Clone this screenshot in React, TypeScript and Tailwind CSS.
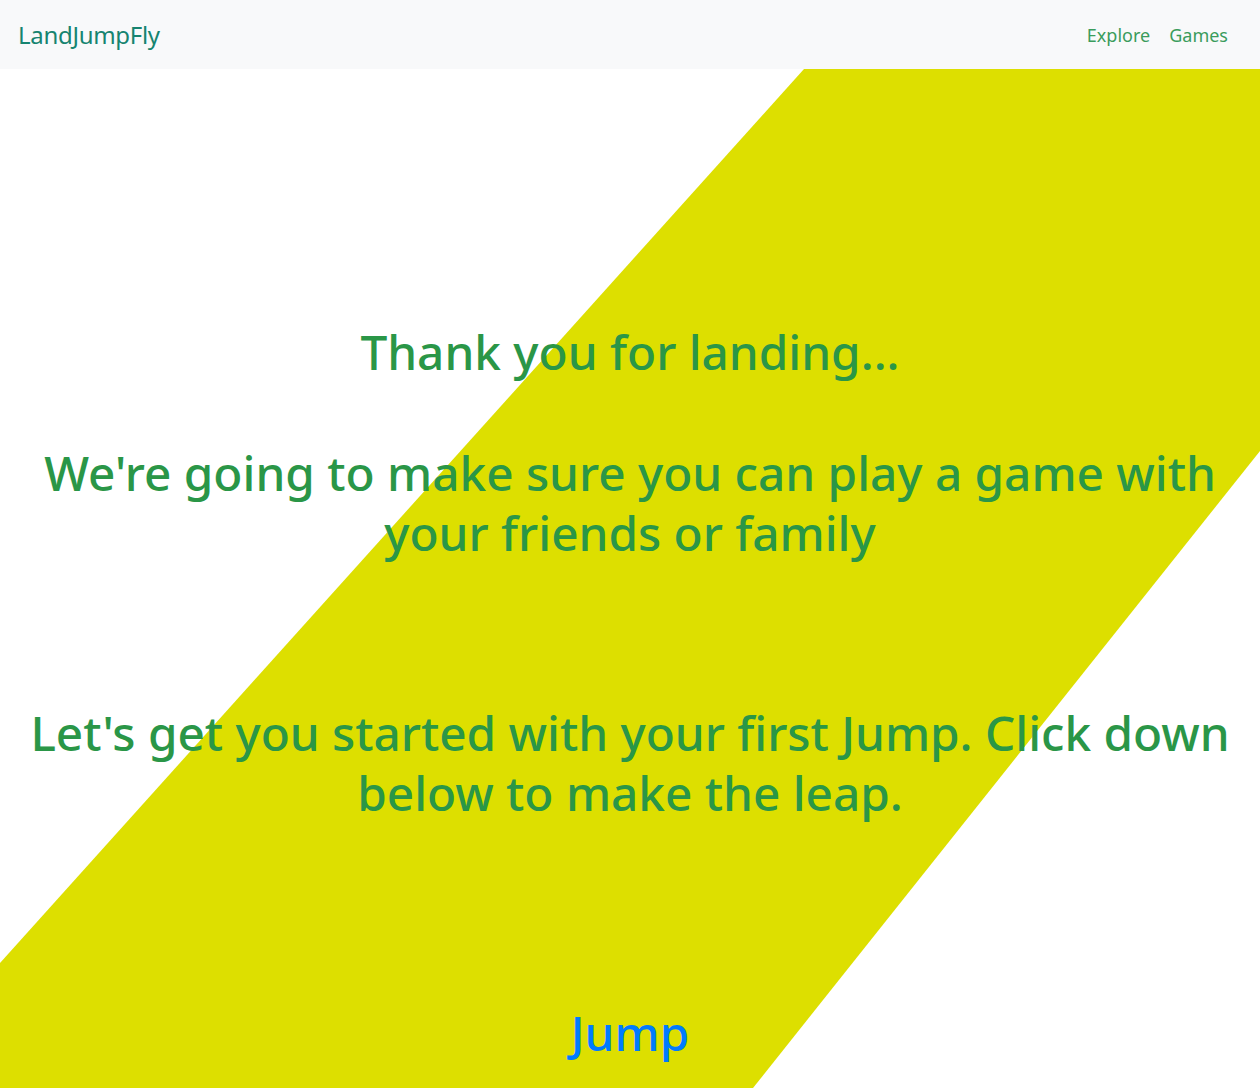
import React from "react";

export default function App() {
  return (
    <div className="min-h-[1088px] bg-white overflow-hidden" style={{ fontFamily: '"Noto Sans", "Open Sans", sans-serif' }}>
      <nav className="h-[69px] bg-[#f8f9fa] flex items-center justify-between pl-[18px] pr-[32px]">
        <a className="text-[24px] text-[#168470] tracking-[-0.3px]" href="#">LandJumpFly</a>
        <div className="flex items-center gap-[19px] text-[18px] text-[#3a9c5c] pt-[1px]">
          <a href="#">Explore</a>
          <a href="#">Games</a>
        </div>
      </nav>
      <section className="relative h-[1019px]">
        <div className="absolute inset-0 bg-[#dddf00] [clip-path:polygon(804px_0,100%_0,100%_382px,753px_100%,0_100%,0_894px)]" />
        <div className="relative flex flex-col items-center text-center text-[#2a9647] font-medium text-[47.7px] leading-[60px] px-[15px]">
          <h1 className="mt-[253px]">Thank you for landing...</h1>
          <h2 className="mt-[61px]">We're going to make sure you can play a game with<br />your friends or family</h2>
          <h2 className="mt-[140px]">Let's get you started with your first Jump. Click down<br />below to make the leap.</h2>
          <a href="#" className="mt-[180px] text-[#007bff]">Jump</a>
        </div>
      </section>
    </div>
  );
}
